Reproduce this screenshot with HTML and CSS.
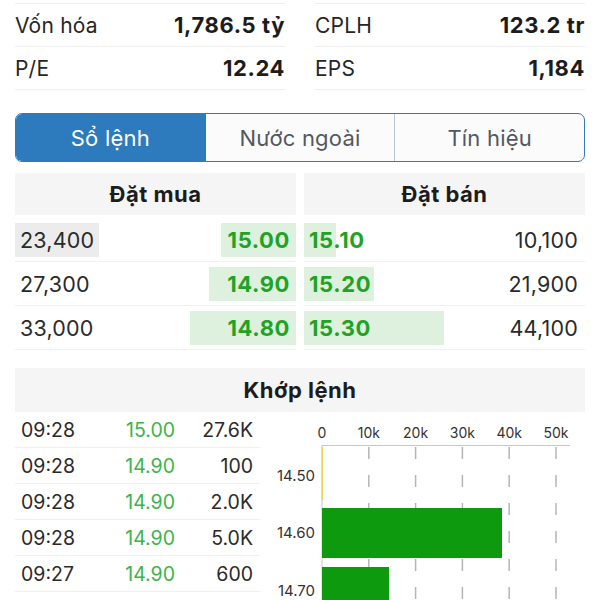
FILE: index.html
```html
<!DOCTYPE html>
<html lang="vi">
<head>
<meta charset="utf-8">
<title>Sổ lệnh</title>
<link rel="stylesheet" href="styles.css">
</head>
<body>
<div class="page">
  <div class="stats">
    <div class="stat-col">
      <div class="stat"><span class="label">Vốn hóa</span><span class="value">1,786.5 tỷ</span></div>
      <div class="stat"><span class="label">P/E</span><span class="value">12.24</span></div>
    </div>
    <div class="stat-col">
      <div class="stat"><span class="label">CPLH</span><span class="value">123.2 tr</span></div>
      <div class="stat"><span class="label">EPS</span><span class="value">1,184</span></div>
    </div>
  </div>

  <div class="tabs">
    <div class="tab active">Sổ lệnh</div>
    <div class="tab">Nước ngoài</div>
    <div class="tab">Tín hiệu</div>
  </div>

  <div class="book">
    <div class="side buy">
      <div class="side-head">Đặt mua</div>
      <div class="orow"><span class="qty flash">23,400</span><span class="px" style="--w:75px">15.00</span></div>
      <div class="orow"><span class="qty">27,300</span><span class="px" style="--w:87px">14.90</span></div>
      <div class="orow"><span class="qty">33,000</span><span class="px" style="--w:106px">14.80</span></div>
    </div>
    <div class="side sell">
      <div class="side-head">Đặt bán</div>
      <div class="orow"><span class="px" style="--w:32px">15.10</span><span class="qty">10,100</span></div>
      <div class="orow"><span class="px" style="--w:70px">15.20</span><span class="qty">21,900</span></div>
      <div class="orow"><span class="px" style="--w:140px">15.30</span><span class="qty">44,100</span></div>
    </div>
  </div>

  <section class="match">
    <div class="match-head">Khớp lệnh</div>
    <div class="match-body">
      <div class="trades">
        <div class="trow"><span class="t">09:28</span><span class="p">15.00</span><span class="v">27.6K</span></div>
        <div class="trow"><span class="t">09:28</span><span class="p">14.90</span><span class="v">100</span></div>
        <div class="trow"><span class="t">09:28</span><span class="p">14.90</span><span class="v">2.0K</span></div>
        <div class="trow"><span class="t">09:28</span><span class="p">14.90</span><span class="v">5.0K</span></div>
        <div class="trow"><span class="t">09:27</span><span class="p">14.90</span><span class="v">600</span></div>
      </div>
      <svg class="chart" width="325" height="188" viewBox="0 0 325 188">
        <g class="xlab">
          <text x="62" y="26">0</text>
          <text x="108.8" y="26">10k</text>
          <text x="155.6" y="26">20k</text>
          <text x="202.4" y="26">30k</text>
          <text x="249.2" y="26">40k</text>
          <text x="296" y="26">50k</text>
        </g>
        <g class="grid">
          <line x1="108.8" y1="35" x2="108.8" y2="188"/>
          <line x1="155.6" y1="35" x2="155.6" y2="188"/>
          <line x1="202.4" y1="35" x2="202.4" y2="188"/>
          <line x1="249.2" y1="35" x2="249.2" y2="188"/>
          <line x1="296" y1="35" x2="296" y2="188"/>
        </g>
        <line class="axis" x1="62" y1="33.5" x2="310" y2="33.5"/>
        <line class="axis" x1="62" y1="33" x2="62" y2="188"/>
        <rect class="bar-y" x="61.5" y="35" width="1.6" height="53"/>
        <rect class="bar-g" x="62" y="96" width="180" height="50"/>
        <rect class="bar-g" x="62" y="155" width="67" height="40"/>
        <g class="ylab">
          <text x="55" y="69">14.50</text>
          <text x="55" y="126">14.60</text>
          <text x="55" y="184">14.70</text>
        </g>
      </svg>
    </div>
  </section>
</div>
</body>
</html>
```

FILE: styles.css
```css
html, body {
  margin: 0;
  padding: 0;
  background: #ffffff;
}

body {
  font-family: Inter, "Liberation Sans", Arial, sans-serif;
  color: #222222;
  overflow: hidden;
}

.page {
  padding: 0 15px;
}

/* ---------- stats ---------- */
.stats {
  display: grid;
  grid-template-columns: 1fr 1fr;
  column-gap: 30px;
  margin-top: 3px;
}

.stat-col {
  border-top: 1px solid #efefef;
}

.stat {
  display: flex;
  justify-content: space-between;
  align-items: center;
  height: 42px;
  border-bottom: 1px solid #efefef;
  font-size: 21px;
}

.stat .label {
  color: #262626;
  letter-spacing: 0.2px;
}

.stat .value {
  font-size: 22px;
  font-weight: 700;
  letter-spacing: 0.6px;
  color: #1c1c1c;
}

/* ---------- tabs ---------- */
.tabs {
  display: flex;
  margin-top: 23px;
  height: 49px;
  box-sizing: border-box;
  border: 1px solid #2d7bbd;
  border-radius: 7px;
  overflow: hidden;
  background: #fbfbfc;
}

.tab {
  flex: 1;
  display: flex;
  align-items: center;
  justify-content: center;
  font-size: 22px;
  letter-spacing: 0.2px;
  color: #53585e;
}

.tab + .tab {
  border-left: 1px solid #b9c5d1;
}

.tab.active {
  background: #2d7bbd;
  color: #ffffff;
}

.tab.active + .tab {
  border-left-color: #2d7bbd;
}

/* ---------- order book ---------- */
.book {
  display: grid;
  grid-template-columns: 1fr 1fr;
  column-gap: 8px;
  margin-top: 11px;
}

.side-head {
  height: 42px;
  display: flex;
  align-items: center;
  justify-content: center;
  background: #f5f5f5;
  font-size: 22px;
  font-weight: 700;
  letter-spacing: 0.5px;
  color: #1c1c1c;
  margin-bottom: 3px;
}

.orow {
  display: flex;
  align-items: center;
  padding: 5px 0 4px;
  border-bottom: 1px solid #f0f0f0;
  font-size: 22px;
}

.orow span {
  height: 34px;
  line-height: 34px;
}

.qty {
  color: #2a2a2a;
  font-size: 21.5px;
  letter-spacing: 0.2px;
}

.px {
  flex: 1;
  font-weight: 700;
  letter-spacing: 0.6px;
  color: #1fa324;
  background-image: linear-gradient(#ddf1de, #ddf1de);
  background-repeat: no-repeat;
  background-size: var(--w) 100%;
}

.buy .qty {
  padding-left: 5px;
}

.buy .qty.flash {
  background: #ececec;
  width: 84px;
  box-sizing: border-box;
}

.buy .px {
  text-align: right;
  padding-right: 6px;
  background-position: right center;
}

.sell .px {
  text-align: left;
  padding-left: 5px;
  background-position: left center;
}

.sell .qty {
  padding-right: 7px;
}

/* ---------- matched ---------- */
.match {
  margin-top: 18px;
}

.match-head {
  height: 44px;
  display: flex;
  align-items: center;
  justify-content: center;
  background: #f5f5f5;
  font-size: 22px;
  font-weight: 700;
  letter-spacing: 0.5px;
  color: #1c1c1c;
}

.match-body {
  display: flex;
  align-items: flex-start;
}

.trades {
  width: 245px;
  flex: none;
}

.trow {
  display: grid;
  grid-template-columns: 85px 75px 78px;
  align-items: center;
  height: 35px;
  padding-right: 7px;
  border-bottom: 1px solid #f0f0f0;
  font-size: 19.5px;
  color: #2a2a2a;
}

.trow .t {
  padding-left: 6px;
}

.trow .p {
  text-align: right;
  color: #3bb54a;
}

.trow .v {
  text-align: right;
}

.chart {
  display: block;
  flex: none;
}

.chart text {
  font-family: Inter, "Liberation Sans", Arial, sans-serif;
  font-size: 14px;
  fill: #333333;
}

.xlab text {
  text-anchor: middle;
}

.ylab text {
  font-size: 15px;
  text-anchor: end;
}

.grid line {
  stroke: #b5b5b5;
  stroke-width: 1.5;
  stroke-dasharray: 12 16;
}

.axis {
  stroke: #c8c8c8;
  stroke-width: 1;
}

.bar-y {
  fill: #e8d95a;
}

.bar-g {
  fill: #0e9a0e;
}
```
